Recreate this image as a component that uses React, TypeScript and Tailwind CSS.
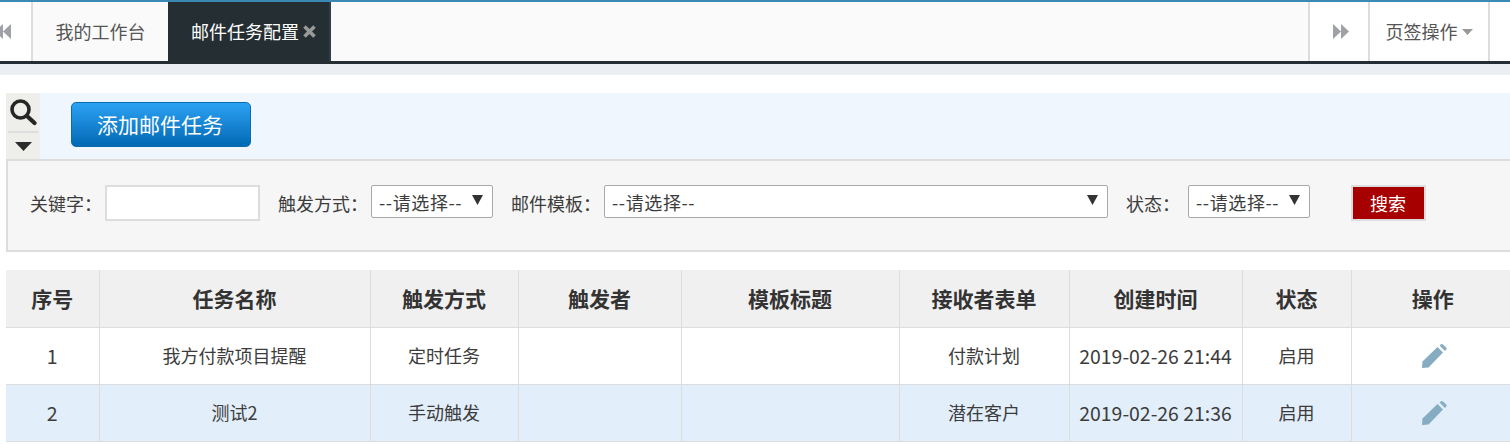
const FONT = "font-['Microsoft_YaHei','Noto_Sans_CJK_SC','Noto_Sans',sans-serif]";

type Row = {
  no: string;
  name: string;
  trigger: string;
  form: string;
  time: string;
  status: string;
};

const COLUMNS = ["序号", "任务名称", "触发方式", "触发者", "模板标题", "接收者表单", "创建时间", "状态", "操作"];

const ROWS: Row[] = [
  { no: "1", name: "我方付款项目提醒", trigger: "定时任务", form: "付款计划", time: "2019-02-26 21:44", status: "启用" },
  { no: "2", name: "测试2", trigger: "手动触发", form: "潜在客户", time: "2019-02-26 21:36", status: "启用" },
];

function DoubleArrow({ flip = false }: { flip?: boolean }) {
  return (
    <svg width="16" height="15" viewBox="0 0 16 15" className={`shrink-0 ${flip ? "-scale-x-100" : ""}`} fill="#9ea2a6">
      <path d="M0 7.500L8 0v15zM8 7.500L16 0v15z" />
    </svg>
  );
}

function Pencil() {
  return (
    <svg width="26" height="26" viewBox="0 0 26 26" fill="#86acc2">
      <path d="M1 25l.5-6.500L16.500 4 22 9.500 7.500 24.500z" />
      <path d="M18.500 2.500l1.500-1.300q1-.6 2 .2l3.200 3.200q.8 1 .1 2l-1.300 1.400z" />
    </svg>
  );
}

function Select({ width, label }: { width: string; label: string }) {
  return (
    <div className={`flex h-[33px] items-center justify-between rounded-[2px] border border-[#a9a9a9] bg-white pr-[9px] pl-[7px] ${width}`}>
      <span className="pt-[2px] tracking-[0.6px]">{label}</span>
      <svg width="11" height="10" viewBox="0 0 11 10" className="mb-1" fill="#333">
        <path d="M0 0h11L5.500 10z" />
      </svg>
    </div>
  );
}

export default function App() {
  return (
    <div className={`h-[444px] w-[1510px] overflow-hidden bg-white text-[18px] text-[#3c3c3c] ${FONT}`}>
      <div className="flex h-[64px] border-t-2 border-b-[3px] border-t-[#3b8ab5] border-b-[#252e33] bg-[#fafafa]">
        <div className="flex w-[33px] items-center overflow-hidden border-r-2 border-[#ddd] bg-white">
          <div className="-ml-[5px]">
            <DoubleArrow />
          </div>
        </div>
        <div className="flex w-[135px] items-center justify-center text-[#555]">我的工作台</div>
        <div className="flex w-[163px] items-center gap-[4px] border-r-2 border-[#2b3f50] bg-[#252e33] pl-[23px] text-white">
          邮件任务配置
          <svg width="13" height="13" viewBox="0 0 13 13" stroke="#999" strokeWidth="3.600">
            <path d="M1.500 1.500l10 10M11.500 1.500l-10 10" />
          </svg>
        </div>
        <div className="flex-1" />
        <div className="flex w-[60px] items-center justify-center border-l-2 border-[#ddd] bg-white pl-[3px]">
          <DoubleArrow flip />
        </div>
        <div className="flex w-[120px] items-center justify-center gap-[4px] border-l-2 border-[#ddd] bg-white text-[#555]">
          页签操作
          <svg width="11" height="6" viewBox="0 0 11 6" fill="#999">
            <path d="M0 0h11L5.500 6z" />
          </svg>
        </div>
        <div className="w-[22px] border-l-2 border-[#ddd] bg-white" />
      </div>
      <div className="h-[11px] bg-[#ebeef3]" />

      <div className="mt-[18px] ml-[6px] flex h-[66px] bg-[#eff6fe]">
        <div className="flex w-[34px] flex-col bg-[#eeeeea] px-[2px]">
          <div className="flex h-[40px] items-center justify-center border-b-2 border-[#ddd]">
            <svg width="28" height="28" viewBox="0 0 28 28" className="-mt-[1px] -ml-[1px]" fill="none" stroke="#262626">
              <circle cx="11.500" cy="11.500" r="8.500" strokeWidth="3.600" />
              <path d="M18.500 18.500l7 6.500" strokeWidth="4.200" strokeLinecap="round" />
            </svg>
          </div>
          <div className="flex flex-1 items-center justify-center">
            <svg width="17" height="9" viewBox="0 0 17 9" fill="#2b2b2b">
              <path d="M0 0h17L8.500 9z" />
            </svg>
          </div>
        </div>
        <div className="ml-[31px] mt-[9px] flex h-[45px] w-[180px] items-center justify-center rounded-[5px] border border-[#0a6cad] bg-gradient-to-b from-[#2ba2f4] to-[#0069b3] pr-[2px] text-[21px] text-white">
          添加邮件任务
        </div>
      </div>

      <div className="ml-[6px] flex h-[93px] items-start border-2 border-r-0 border-[#ddd] bg-[#f6f6f6] pt-[24px] pl-[22px]">
        <span className="mt-[5px] w-[75px]">关键字：</span>
        <div className="h-[36px] w-[155px] border-2 border-[#ddd] bg-white" />
        <span className="mt-[5px] ml-[18px] w-[93px]">触发方式：</span>
        <Select width="w-[122px]" label="--请选择--" />
        <span className="mt-[5px] ml-[18px] w-[93px]">邮件模板：</span>
        <Select width="w-[504px]" label="--请选择--" />
        <span className="mt-[5px] ml-[18px] w-[62px]">状态：</span>
        <Select width="w-[122px]" label="--请选择--" />
        <div className="ml-[41px] flex h-[36px] w-[75px] items-center justify-center border-2 border-[#ddd] bg-[#a60000] pr-[1px] text-white">
          搜索
        </div>
      </div>

      <table className="mt-[18px] ml-[6px] w-[1508px] table-fixed border-collapse">
        <colgroup>
          <col className="w-[93px]" />
          <col className="w-[271px]" />
          <col className="w-[148px]" />
          <col className="w-[163px]" />
          <col className="w-[218px]" />
          <col className="w-[170px]" />
          <col className="w-[173px]" />
          <col className="w-[109px]" />
          <col className="w-[163px]" />
        </colgroup>
        <thead>
          <tr className="h-[57px] border-b border-[#ddd] bg-[#f0f0f0] text-[21px] text-[#333]">
            {COLUMNS.map((c, i) => (
              <th key={c} className={`font-bold ${i < COLUMNS.length - 1 ? "border-r border-[#ddd]" : ""}`}>
                {c}
              </th>
            ))}
          </tr>
        </thead>
        <tbody>
          {ROWS.map((row, i) => (
            <tr key={row.no} className={`h-[57px] border-b border-[#ddd] text-center ${i % 2 ? "bg-[#e2eefa]" : "bg-white"}`}>
              <td className="border-r border-[#ddd] text-[19.5px]">{row.no}</td>
              <td className="border-r border-[#ddd]">{row.name}</td>
              <td className="border-r border-[#ddd]">{row.trigger}</td>
              <td className="border-r border-[#ddd]" />
              <td className="border-r border-[#ddd]" />
              <td className="border-r border-[#ddd]">{row.form}</td>
              <td className="border-r border-[#ddd] text-[19.4px]">{row.time}</td>
              <td className="border-r border-[#ddd]">{row.status}</td>
              <td>
                <div className="flex justify-center pl-[2px]">
                  <Pencil />
                </div>
              </td>
            </tr>
          ))}
        </tbody>
      </table>
    </div>
  );
}
